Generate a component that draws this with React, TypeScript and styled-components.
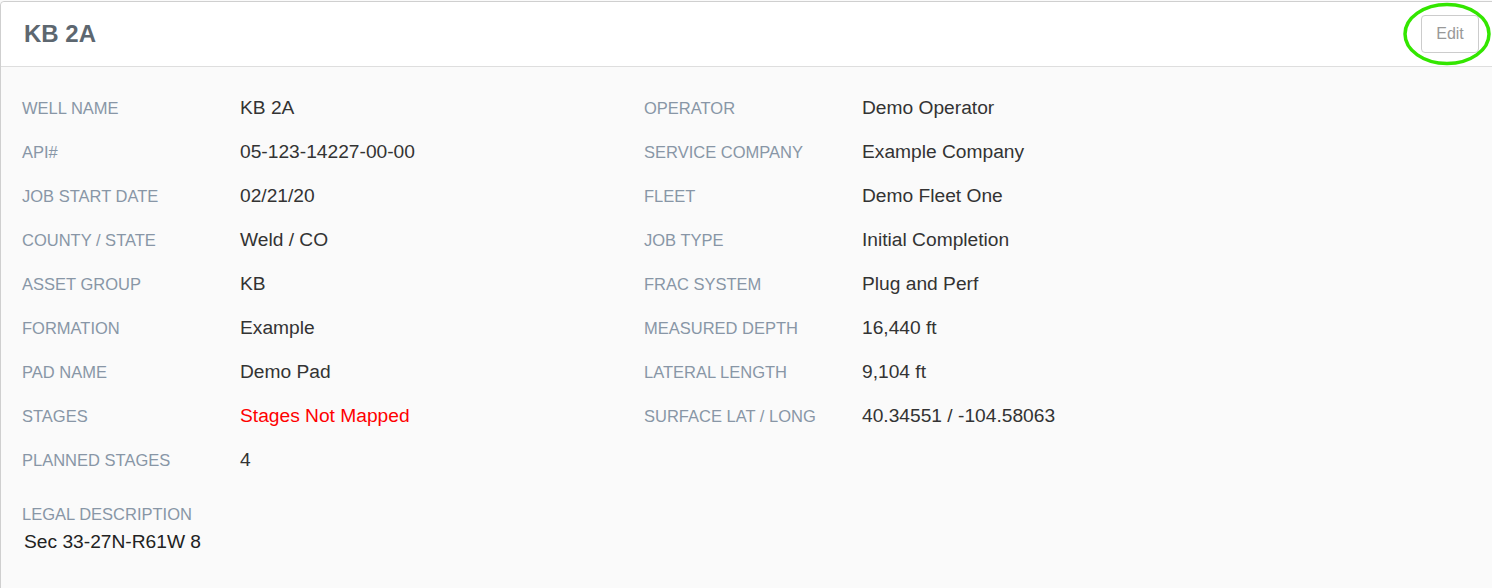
import React, { FC } from "react";
import styled, { createGlobalStyle } from "styled-components";

type Field = {
  label: string;
  value: string;
  alert?: boolean;
};

const leftFields: Field[] = [
  { label: "Well Name", value: "KB 2A" },
  { label: "API#", value: "05-123-14227-00-00" },
  { label: "Job Start Date", value: "02/21/20" },
  { label: "County / State", value: "Weld / CO" },
  { label: "Asset Group", value: "KB" },
  { label: "Formation", value: "Example" },
  { label: "Pad Name", value: "Demo Pad" },
  { label: "Stages", value: "Stages Not Mapped", alert: true },
  { label: "Planned Stages", value: "4" },
];

const rightFields: Field[] = [
  { label: "Operator", value: "Demo Operator" },
  { label: "Service Company", value: "Example Company" },
  { label: "Fleet", value: "Demo Fleet One" },
  { label: "Job Type", value: "Initial Completion" },
  { label: "Frac System", value: "Plug and Perf" },
  { label: "Measured Depth", value: "16,440 ft" },
  { label: "Lateral Length", value: "9,104 ft" },
  { label: "Surface Lat / Long", value: "40.34551 / -104.58063" },
];

const FieldList: FC<{ fields: Field[] }> = ({ fields }) => (
  <Column>
    {fields.map((f) => (
      <Row key={f.label}>
        <Label>{f.label}</Label>
        <Value $alert={f.alert}>{f.value}</Value>
      </Row>
    ))}
  </Column>
);

const App: FC = () => {
  return (
    <>
      <GlobalStyle />
      <Card>
        <Header>
          <Title>KB 2A</Title>
          <EditWrap>
            <EditButton>Edit</EditButton>
            {/* annotation circle drawn over the button */}
            <Highlight viewBox="0 0 92 66" width="92" height="66">
              <ellipse
                cx="46"
                cy="33"
                rx="42"
                ry="29.5"
                fill="none"
                stroke="#33e600"
                strokeWidth="3.5"
              />
            </Highlight>
          </EditWrap>
        </Header>

        <Body>
          <Columns>
            <FieldList fields={leftFields} />
            <FieldList fields={rightFields} />
          </Columns>

          <Legal>
            <Label>Legal Description</Label>
            <LegalValue>Sec 33-27N-R61W 8</LegalValue>
          </Legal>
        </Body>
      </Card>
    </>
  );
};

const GlobalStyle = createGlobalStyle`
  html, body {
    margin: 0;
    padding: 0;
    background: #fafafa;
  }
  body {
    font-family: "Liberation Sans", Arial, sans-serif;
    overflow: hidden;
  }
`;

const Card = styled.div`
  margin-top: 1px;
  width: calc(100% + 6px);
  height: 600px;
  border: 1px solid #cfcfcf;
  border-radius: 4px;
  background: #fafafa;
  box-sizing: border-box;
`;

const Header = styled.div`
  display: flex;
  align-items: center;
  justify-content: space-between;
  height: 64px;
  padding: 0 18px 0 23px;
  background: #fff;
  border-bottom: 1px solid #dedede;
  border-radius: 4px 4px 0 0;
`;

const Title = styled.h1`
  margin: 0;
  font-size: 24px;
  font-weight: bold;
  color: #5d6770;
`;

const EditWrap = styled.div`
  position: relative;
  display: flex;
`;

const EditButton = styled.button`
  width: 58px;
  height: 38px;
  border: 1px solid #cccccc;
  border-radius: 4px;
  background: #fff;
  color: #999;
  font-family: inherit;
  font-size: 16px;
  cursor: pointer;
`;

const Highlight = styled.svg`
  position: absolute;
  left: -20px;
  top: -14px;
  pointer-events: none;
`;

const Body = styled.div`
  padding: 19px 0 0 21px;
`;

const Columns = styled.div`
  display: grid;
  grid-template-columns: 622px 1fr;
`;

const Column = styled.div`
  display: flex;
  flex-direction: column;
`;

const Row = styled.div`
  display: flex;
  align-items: baseline;
  height: 44px;
  line-height: 44px;
`;

const Label = styled.div`
  width: 218px;
  flex-shrink: 0;
  font-size: 16.5px;
  text-transform: uppercase;
  color: #8896a6;
`;

const Value = styled.div<{ $alert?: boolean }>`
  font-size: 19.2px;
  color: ${({ $alert }) => ($alert ? "#ff0000" : "#333")};
`;

const Legal = styled.div`
  margin-top: 18px;
  line-height: 28px;
`;

const LegalValue = styled.div`
  margin-left: 2px;
  font-size: 19.2px;
  color: #222;
`;

export default App;
